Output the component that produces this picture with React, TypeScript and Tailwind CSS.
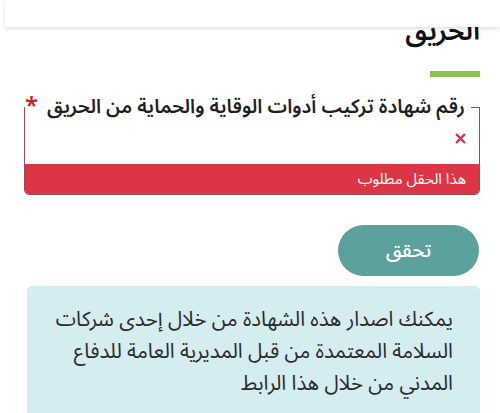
import React from "react";

const font = {
  fontFamily: '"Noto Sans Arabic", "Noto Kufi Arabic", "DejaVu Sans", "Noto Sans", sans-serif',
};

export default function App() {
  return (
    <div
      dir="rtl"
      style={font}
      className="relative w-[500px] h-[413px] overflow-hidden bg-white text-[#222]"
    >
      <div className="relative z-10 ml-[5px] h-[27px] bg-white shadow-[0_2px_4px_rgba(0,0,0,0.12)]" />

      <div className="-mt-[15px] pr-[20px] text-[27px] font-semibold leading-[40px] text-[#111]">
        الحريق
      </div>

      <div className="mr-[20px] mt-[19px] h-[6px] w-[50px] bg-[#8cc152]" />

      <fieldset className="mr-[20px] ml-[27px] mt-[17px] rounded-b-[5px] border border-[#9b4a4f] p-0 pr-[8px]">
        <legend className="flex items-center whitespace-nowrap pr-[6px] text-[19.5px] font-semibold leading-[26px] text-[#1f1f1f]">
          <span className="whitespace-nowrap">رقم شهادة تركيب أدوات الوقاية والحماية من الحريق</span>
          <span className="mr-[9px] text-[24px] leading-[20px] text-[#d21f2b]">*</span>
        </legend>
        <div className="flex h-[44px] items-start pr-[5px] pt-[10px]">
          <svg width="11" height="11" viewBox="0 0 10 10" className="mt-[3px]">
            <path d="M1.5 1.5 L8.5 8.5 M8.5 1.5 L1.5 8.5" stroke="#d0354a" strokeWidth="2" strokeLinecap="round" />
          </svg>
        </div>
        <div className="-mr-[8px] flex h-[30px] items-center rounded-b-[4px] bg-[#dc3545] pr-[13px] text-[15px] text-white">
          هذا الحقل مطلوب
        </div>
      </fieldset>

      <div className="mr-[21px] mt-[30px] flex h-[51px] w-[141px] items-center justify-center rounded-full bg-[#5ba19c] text-[20px] font-medium text-white">
        تحقق
      </div>

      <div className="mr-[20px] ml-[27px] mt-[10px] rounded-[5px] bg-[#d5ecf0] pb-[20px] pl-[18px] pr-[27px] pt-[18px] text-[20.5px] leading-[32px] text-[#2a2a2a]">
        يمكنك اصدار هذه الشهادة من خلال إحدى شركات السلامة المعتمدة من قبل المديرية العامة للدفاع المدني من خلال هذا الرابط
      </div>
    </div>
  );
}
